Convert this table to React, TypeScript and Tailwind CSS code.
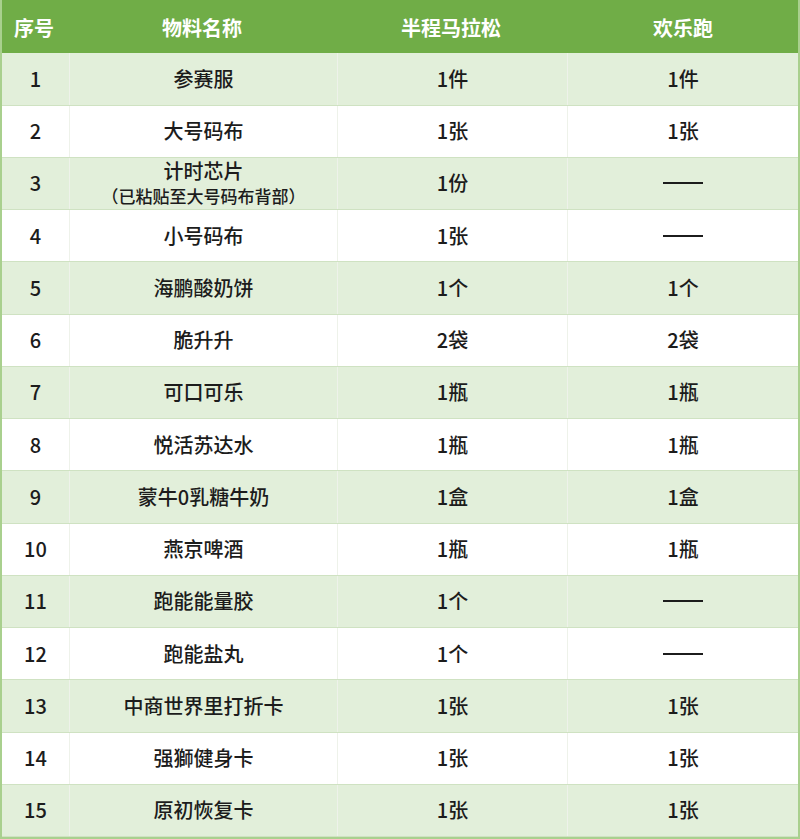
import React from "react";

type Row = { n: string; name: string; sub?: string; a: string; b: string };

const rows: Row[] = [
  { n: "1", name: "参赛服", a: "1件", b: "1件" },
  { n: "2", name: "大号码布", a: "1张", b: "1张" },
  { n: "3", name: "计时芯片", sub: "（已粘贴至大号码布背部）", a: "1份", b: "——" },
  { n: "4", name: "小号码布", a: "1张", b: "——" },
  { n: "5", name: "海鹏酸奶饼", a: "1个", b: "1个" },
  { n: "6", name: "脆升升", a: "2袋", b: "2袋" },
  { n: "7", name: "可口可乐", a: "1瓶", b: "1瓶" },
  { n: "8", name: "悦活苏达水", a: "1瓶", b: "1瓶" },
  { n: "9", name: "蒙牛0乳糖牛奶", a: "1盒", b: "1盒" },
  { n: "10", name: "燕京啤酒", a: "1瓶", b: "1瓶" },
  { n: "11", name: "跑能能量胶", a: "1个", b: "——" },
  { n: "12", name: "跑能盐丸", a: "1个", b: "——" },
  { n: "13", name: "中商世界里打折卡", a: "1张", b: "1张" },
  { n: "14", name: "强獅健身卡", a: "1张", b: "1张" },
  { n: "15", name: "原初恢复卡", a: "1张", b: "1张" },
];

const font = {
  fontFamily: '"Noto Sans CJK SC", "Noto Sans", sans-serif',
};

function Cell({ children, last }: { children: React.ReactNode; last?: boolean }) {
  return (
    <div
      className={
        "flex flex-col items-center justify-center text-center " +
        (last ? "" : "border-r border-[#eef2ea]")
      }
    >
      {children}
    </div>
  );
}

export default function App() {
  return (
    <div
      className="w-[800px] h-[839px] flex flex-col bg-white text-[#1c1c1c] border-l-2 border-r-2 border-b-2 border-[#a9d08e] overflow-hidden"
      style={font}
    >
      <div className="flex-1 grid grid-cols-[68px_268px_230px_1fr] bg-[#70ad47] text-white font-bold text-[20px] -mx-[2px] pt-[2px]">
        <div className="flex items-center justify-center">序号</div>
        <div className="flex items-center justify-center">物料名称</div>
        <div className="flex items-center justify-center">半程马拉松</div>
        <div className="flex items-center justify-center">欢乐跑</div>
      </div>
      {rows.map((r, i) => (
        <div
          key={r.n}
          className={
            "flex-1 grid grid-cols-[68px_268px_230px_1fr] text-[20px] font-medium border-b border-[#cfe2c2] " +
            (i % 2 === 0 ? "bg-[#e2efda]" : "bg-white")
          }
        >
          <Cell>{r.n}</Cell>
          <Cell>
            <div className="leading-[26px]">{r.name}</div>
            {r.sub && <div className="text-[17px] leading-[24px]">{r.sub}</div>}
          </Cell>
          <Cell>{r.a}</Cell>
          <Cell last>
            {r.b === "——" ? (
              <div className="w-[40px] h-[2px] bg-[#1c1c1c]" />
            ) : (
              r.b
            )}
          </Cell>
        </div>
      ))}
    </div>
  );
}
